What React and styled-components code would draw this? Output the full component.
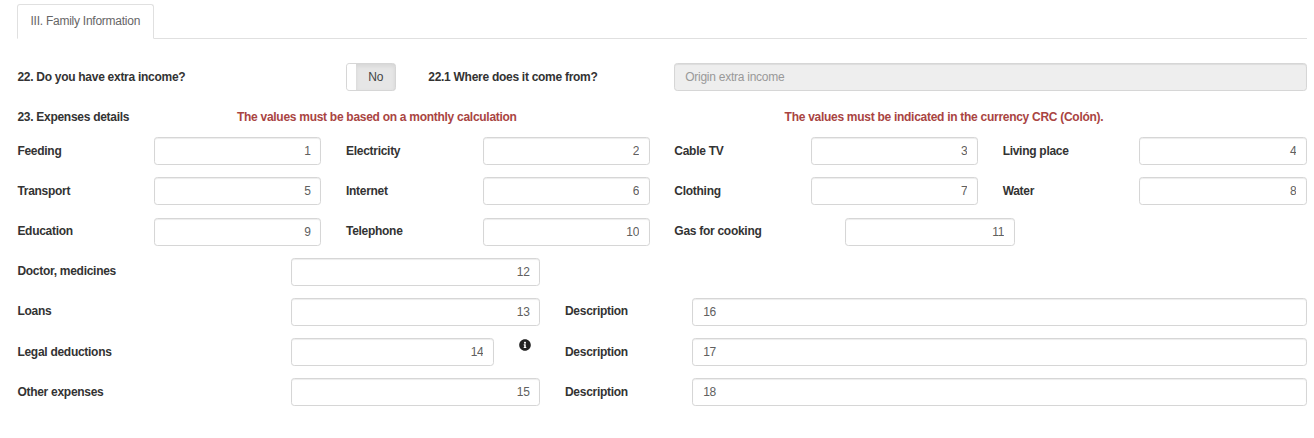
import React from "react";
import styled, { createGlobalStyle, css } from "styled-components";
import { FaInfoCircle } from "react-icons/fa";

const GlobalStyle = createGlobalStyle`
  *, *::before, *::after { box-sizing: border-box; }
  body {
    margin: 0;
    background: #fff;
    color: #333;
    font: 12px/16px "Liberation Sans", Arial, sans-serif;
    letter-spacing: -0.25px;
  }
`;

const Page = styled.main`
  width: 1314px;
  height: 438px;
  padding: 4px 7px 0 17px;
  overflow: hidden;
`;

const TabBar = styled.div`
  display: flex;
  height: 35px;
  border-bottom: 1px solid #e0e0e0;
`;

const Tab = styled.div`
  height: 35px;
  width: 137px;
  padding: 8px 0 0 12.5px;
  border: 1px solid #e0e0e0;
  border-bottom-color: #fff;
  border-radius: 3px 3px 0 0;
  background: #fff;
  color: #666;
  white-space: nowrap;
`;

const Form = styled.form`
  display: flex;
  flex-direction: column;
  padding-top: 24px;
`;

const layouts = {
  income: "304.2px 57.5px 221.3px 1fr",
  notice: "195px 523px 1fr",
  quarters: "112.3px 167.1px 112.2px 167px 112.1px 167px 112.2px 1fr",
  gas: "112.3px 167.1px 112.2px 167px 146px 170px 1fr",
  wide: "249px 249.4px 102.6px 1fr",
};

const Row = styled.div`
  display: grid;
  grid-template-columns: ${(p) => layouts[p.$layout]};
  column-gap: 24.6px;
  padding-left: 0.4px;
  height: ${(p) => p.$height || 40.15}px;
  align-items: start;
`;

const Label = styled.label`
  padding-top: 5.6px;
  font-weight: 700;
  letter-spacing: -0.28px;
  white-space: nowrap;
`;

const Notice = styled.strong`
  padding-top: 5.6px;
  color: #a94442;
  letter-spacing: -0.28px;
  white-space: nowrap;
`;

const Input = styled.input`
  display: block;
  width: 100%;
  min-width: 0;
  height: 28px;
  margin: 0;
  padding: 0 9.7px 0 10px;
  border: 1px solid #d6d6d6;
  border-radius: 3.3px;
  background: #fff;
  box-shadow: inset 0 1px 1px rgba(0, 0, 0, 0.075);
  color: #606060;
  font: inherit;
  letter-spacing: inherit;
  text-align: left;
  &::placeholder { color: #999; opacity: 1; }
  &:disabled { background: #eee; }
  ${(p) => p.$amount && css`text-align: right;`}
`;

const Toggle = styled.button`
  display: flex;
  width: 50px;
  height: 28px;
  padding: 0;
  border: 1px solid #d6d6d6;
  border-radius: 3.3px;
  overflow: hidden;
  background: #e6e6e6;
  color: #444;
  font: inherit;
  letter-spacing: inherit;
`;

const ToggleHandle = styled.span`
  width: 9px;
  height: 100%;
  background: #fff;
`;

const ToggleText = styled.span`
  flex: 1;
  height: 100%;
  padding-top: 5px;
  box-shadow: inset 0 2px 4px rgba(0, 0, 0, 0.08);
  text-align: center;
`;

const InfoField = styled.div`
  display: grid;
  grid-template-columns: 203.2px 12px;
  column-gap: 24.6px;
`;

const InfoIcon = styled(FaInfoCircle)`
  width: 12px;
  height: 12px;
  margin-top: 1px;
  color: #222;
`;

const Amount = ({ value, label }) => (
  <Input $amount aria-label={label} defaultValue={value} />
);

const Expense = ({ label, value }) => (
  <>
    <Label>{label}</Label>
    <Amount label={label} value={value} />
  </>
);

const expenseRows = [
  { layout: "quarters", items: [["Feeding", 1], ["Electricity", 2], ["Cable TV", 3], ["Living place", 4]] },
  { layout: "quarters", items: [["Transport", 5], ["Internet", 6], ["Clothing", 7], ["Water", 8]] },
  { layout: "gas", items: [["Education", 9], ["Telephone", 10], ["Gas for cooking", 11]] },
];

const detailRows = [
  { label: "Doctor, medicines", value: 12 },
  { label: "Loans", value: 13, description: 16 },
  { label: "Legal deductions", value: 14, description: 17, info: true },
  { label: "Other expenses", value: 15, description: 18 },
];

export default function App() {
  return (
    <>
      <GlobalStyle />
      <Page>
        <TabBar>
          <Tab>III. Family Information</Tab>
        </TabBar>
        <Form>
          <Row $layout="income" $height={40}>
            <Label>22. Do you have extra income?</Label>
            <Toggle type="button">
              <ToggleHandle />
              <ToggleText>No</ToggleText>
            </Toggle>
            <Label>22.1 Where does it come from?</Label>
            <Input disabled placeholder="Origin extra income" />
          </Row>
          <Row $layout="notice" $height={34.3}>
            <Label>23. Expenses details</Label>
            <Notice>The values must be based on a monthly calculation</Notice>
            <Notice>The values must be indicated in the currency CRC (Colón).</Notice>
          </Row>
          {expenseRows.map((row, i) => (
            <Row key={i} $layout={row.layout}>
              {row.items.map(([label, value]) => (
                <Expense key={label} label={label} value={value} />
              ))}
            </Row>
          ))}
          {detailRows.map((row) => (
            <Row key={row.label} $layout="wide">
              <Label>{row.label}</Label>
              {row.info ? (
                <InfoField>
                  <Amount label={row.label} value={row.value} />
                  <InfoIcon />
                </InfoField>
              ) : (
                <Amount label={row.label} value={row.value} />
              )}
              {row.description && (
                <>
                  <Label>Description</Label>
                  <Input aria-label={`${row.label} description`} defaultValue={row.description} />
                </>
              )}
            </Row>
          ))}
        </Form>
      </Page>
    </>
  );
}
